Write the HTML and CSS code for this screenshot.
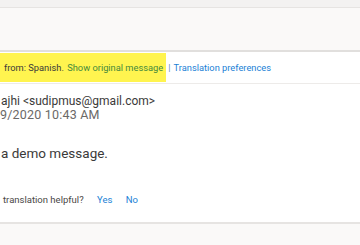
FILE: index.html
```html
<!DOCTYPE html>
<html lang="en">

<head>
    <meta charset="UTF-8">
    <meta name="viewport" content="width=device-width, initial-scale=1.0">
    <title>Message</title>
    <link rel="stylesheet" href="styles.css">
</head>

<body>
    <div class="top-strip"></div>
    <div class="command-bar"></div>

    <div class="translate-bar">
        <span class="highlight">from: Spanish. <a href="#" class="show-original">Show original message</a></span>
        <span class="sep">|</span>
        <a href="#" class="link">Translation preferences</a>
    </div>

    <div class="message">
        <div class="sender">ajhi &lt;sudipmus@gmail.com&gt;</div>
        <div class="date">9/2020 10:43 AM</div>
        <div class="body-text">a demo message.</div>
        <div class="feedback">
            <span>translation helpful?</span>
            <a href="#" class="link">Yes</a>
            <a href="#" class="link">No</a>
        </div>
    </div>

    <div class="footer"></div>
</body>

</html>
```

FILE: styles.css
```css
body {
    margin: 0;
    font-family: Roboto, "Open Sans", sans-serif;
    color: #3b3a39;
    background-color: #fff;
    overflow: hidden;
}

a {
    text-decoration: none;
}

.link {
    color: #1b7fd6;
}

.top-strip {
    height: 7px;
    background-color: #f3f2f1;
    border-bottom: 1px solid #e6e4e2;
}

.command-bar {
    height: 42px;
    background-color: #faf9f8;
    border-bottom: 2px solid #e1dfdd;
}

.translate-bar {
    display: flex;
    align-items: flex-start;
    height: 32px;
    padding-top: 1px;
    box-sizing: border-box;
    border-bottom: 1px solid #edebe9;
    font-size: 9.3px;
    line-height: 29px;
    white-space: nowrap;
}

.highlight {
    background-color: #fff44f;
    padding: 0 3px 0 4px;
    color: #3b3a39;
}

.show-original {
    color: #468a3c;
    margin-left: 1px;
}

.sep {
    color: #6a8fb8;
    margin: 0 3px 0 2px;
}

.message {
    height: 140px;
    padding-top: 11px;
    box-sizing: border-box;
    border-bottom: 2px solid #e6e4e2;
    white-space: nowrap;
}

.sender {
    font-size: 12px;
    line-height: 13px;
    padding-left: 1px;
}

.date {
    font-size: 12.5px;
    line-height: 13px;
    letter-spacing: 0.2px;
    color: #6b6967;
}

.body-text {
    font-size: 13.5px;
    line-height: 18px;
    margin-top: 23px;
    padding-left: 1px;
}

.feedback {
    font-size: 9.5px;
    line-height: 14px;
    margin-top: 31px;
    padding-left: 3px;
    color: #4a4846;
}

.feedback .link {
    margin-left: 11px;
}

.footer {
    height: 30px;
    background-color: #faf9f8;
}
```
